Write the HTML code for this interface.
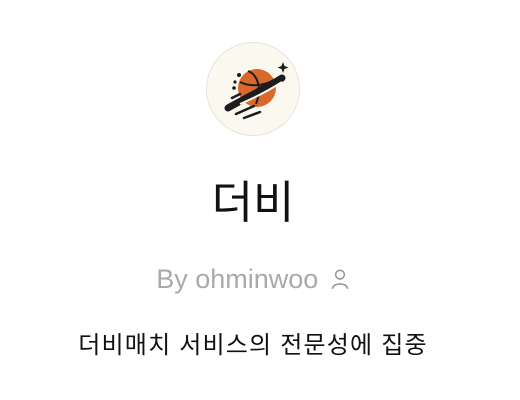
<!DOCTYPE html><html><head><meta charset="utf-8"><style>
body{margin:0;width:520px;height:400px;background:#fff;font-family:"Liberation Sans","Noto Sans CJK KR",sans-serif;position:relative;overflow:hidden}
.c{position:absolute;left:206px;top:42px;width:94px;height:94px;border-radius:50%;background:#faf8ef;border:1.5px solid #e6e4dc;box-sizing:border-box}
.t{position:absolute;left:0;width:506px;text-align:center;white-space:nowrap}
</style></head><body>
<div class="c"><svg width="94" height="94" viewBox="0 0 94 94" style="position:absolute;left:-1.5px;top:-1.5px">
<circle cx="51" cy="46" r="19" fill="#d9692a"/>
<path d="M42 29 C52 33 56 46 50 62" stroke="#1c1c1c" stroke-width="2" fill="none"/>
<path d="M34 40 C44 45 58 44 68 38" stroke="#1c1c1c" stroke-width="2" fill="none"/>
<path d="M22 66 C36 58 60 46 76 36" stroke="#1c1c1c" stroke-width="7" fill="none" stroke-linecap="round"/>
<path d="M34 62 C48 56 62 49 76 40" stroke="#faf8ef" stroke-width="2" fill="none"/>
<path d="M30 72 L48 64 M38 76 L54 70 M26 56 L34 52" stroke="#1c1c1c" stroke-width="2.5" stroke-linecap="round"/>
<circle cx="33" cy="33" r="2" fill="#1c1c1c"/><circle cx="29" cy="40" r="1.6" fill="#1c1c1c"/><circle cx="28" cy="46" r="1.8" fill="#1c1c1c"/>
<path d="M77 20 l1.5 4 4 1.5 -4 1.5 -1.5 4 -1.5 -4 -4 -1.5 4 -1.5z" fill="#1c1c1c"/>
</svg></div>
<div class="t" style="top:166px;font-size:45px;color:#111">더비</div>
<div class="t" style="top:264px;font-size:27px;color:#aaa">By ohminwoo <svg width="20" height="24" viewBox="0 0 18 22" style="vertical-align:-3px;margin-left:4px"><circle cx="9" cy="7" r="4" fill="none" stroke="#999" stroke-width="1.5"/><path d="M2 20 C3 14 15 14 16 20" fill="none" stroke="#999" stroke-width="1.5"/></svg></div>
<div class="t" style="top:325px;font-size:24px;letter-spacing:1.2px;color:#111">더비매치 서비스의 전문성에 집중</div>
</body></html>
